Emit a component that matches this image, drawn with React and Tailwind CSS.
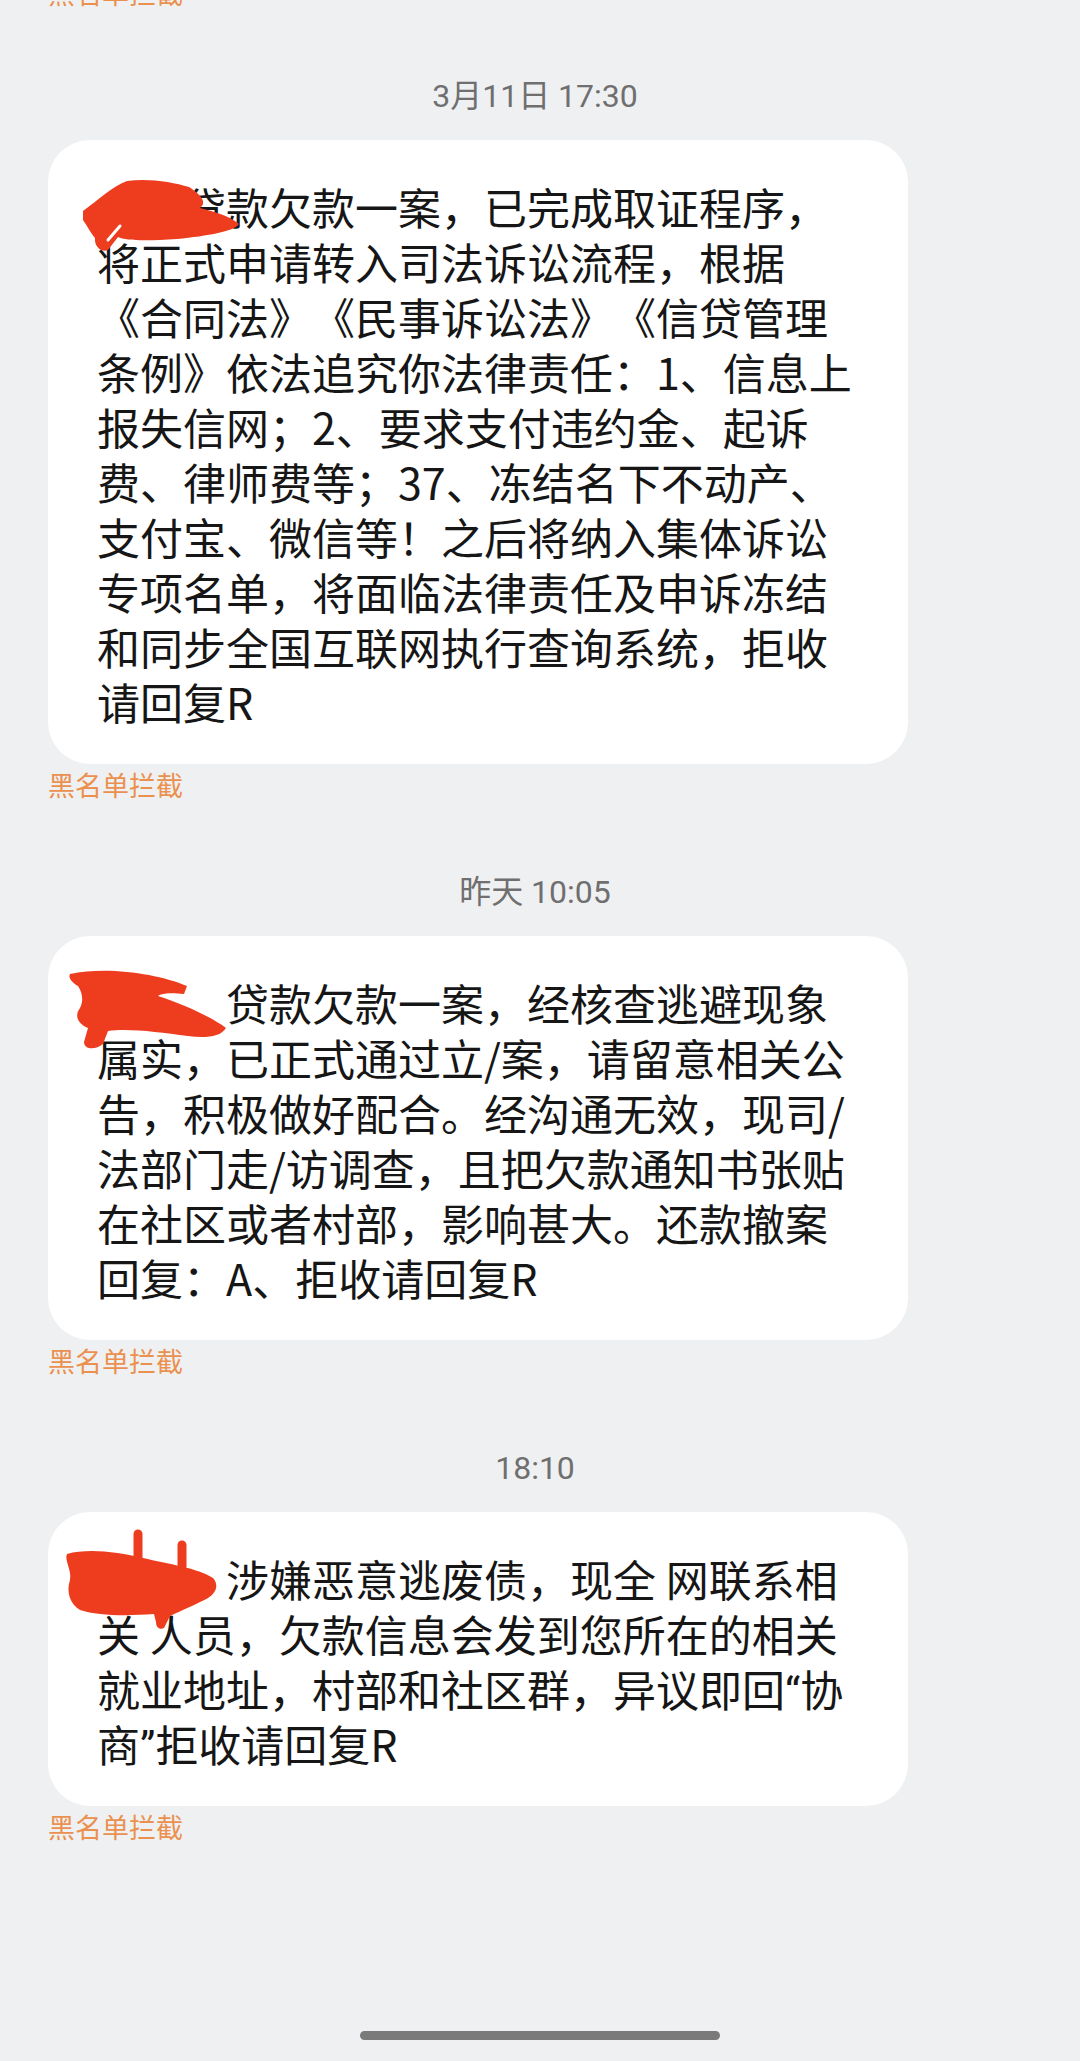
import React from 'react';

const messages = [
    {
        time: '3月11日 17:30',
        lines: [
            '\u3000\u3000贷款欠款一案，已完成取证程序，',
            '将正式申请转入司法诉讼流程，根据',
            '《合同法》《民事诉讼法》《信贷管理',
            '条例》依法追究你法律责任：1、信息上',
            '报失信网；2、要求支付违约金、起诉',
            '费、律师费等；37、冻结名下不动产、',
            '支付宝、微信等！之后将纳入集体诉讼',
            '专项名单，将面临法律责任及申诉冻结',
            '和同步全国互联网执行查询系统，拒收',
            '请回复R',
        ],
        scribble: 'a',
    },
    {
        time: '昨天 10:05',
        lines: [
            '\u3000\u3000\u3000贷款欠款一案，经核查逃避现象',
            '属实，已正式通过立/案，请留意相关公',
            '告，积极做好配合。经沟通无效，现司/',
            '法部门走/访调查，且把欠款通知书张贴',
            '在社区或者村部，影响甚大。还款撤案',
            '回复：A、拒收请回复R',
        ],
        scribble: 'b',
    },
    {
        time: '18:10',
        lines: [
            '\u3000\u3000\u3000涉嫌恶意逃废债，现全 网联系相',
            '关 人员，欠款信息会发到您所在的相关',
            '就业地址，村部和社区群，异议即回“协',
            '商”拒收请回复R',
        ],
        scribble: 'c',
    },
];

// hand-drawn red marks covering the sender name
const Scribble = ({ kind }) => {
    const red = '#ee3d1e';
    return (
        <svg className="absolute left-0 top-0 pointer-events-none" width="240" height="140" viewBox="0 0 240 140">
            {kind === 'a' && (
                <g>
                    <path
                        fill={red}
                        d="M35 71 C 50 60, 65 46, 79 41 C 100 38, 125 42, 141 47 C 152 54, 160 62, 152 68 C 167 72, 182 76, 191 84 C 187 91, 160 96, 129 99 C 100 101, 78 101, 70 97 L 60 110 C 53 113, 46 106, 47 98 C 42 92, 38 84, 35 80 Z"
                    />
                    <path d="M60 100 L 72 86" stroke="#ffffff" strokeWidth="3" strokeLinecap="round" />
                </g>
            )}
            {kind === 'b' && (
                <path
                    fill={red}
                    d="M22 38 C 60 30, 110 38, 139 50 L 136 58 C 120 56, 112 58, 110 60 C 140 70, 165 82, 178 92 C 172 102, 155 102, 140 100 C 110 96, 80 92, 60 95 L 55 108 C 48 114, 36 114, 36 106 L 40 92 C 30 88, 26 80, 32 72 C 36 64, 34 56, 30 50 C 24 46, 20 42, 22 38 Z"
                />
            )}
            {kind === 'c' && (
                <g>
                    <path
                        fill={red}
                        d="M19 42 C 40 36, 70 40, 95 46 C 120 52, 150 56, 165 66 C 172 74, 168 84, 152 90 C 140 96, 130 100, 122 104 L 116 116 C 112 118, 108 116, 108 110 L 106 102 C 80 104, 50 104, 32 98 C 22 92, 18 80, 22 68 C 24 58, 16 48, 19 42 Z"
                    />
                    <path d="M90 60 L 90 22" stroke={red} strokeWidth="9" strokeLinecap="round" />
                    <path d="M134 62 L 134 33" stroke={red} strokeWidth="9" strokeLinecap="round" />
                </g>
            )}
        </svg>
    );
};

const BlockedLabel = ({ className = '' }) => (
    <div className={`text-[27px] leading-[36px] text-[#eb9150] ${className}`}>黑名单拦截</div>
);

// curly quotes are narrow in the original font
const renderLine = (line) =>
    line.split(/([“”])/).map((part, k) =>
        part === '“' || part === '”' ? (
            <span key={k} className="font-['Roboto',sans-serif] leading-none">
                {part}
            </span>
        ) : (
            part
        )
    );

const App = () => {
    return (
        <div className="min-h-[2061px] w-[1080px] bg-[#eff0f2] flex flex-col font-['Noto_Sans_CJK_SC',sans-serif] overflow-hidden [text-spacing-trim:space-all]">
            <div className="px-[48px] flex flex-col">
                <BlockedLabel className="-mt-[25px]" />
                {messages.map((m, i) => (
                    <div key={i} className="flex flex-col">
                        <div
                            className={`pr-[10px] text-center text-[32px] leading-[40px] text-[#6f6f6f] font-['Roboto','Noto_Sans_CJK_SC',sans-serif] ${
                                i === 0 ? 'mt-[65px]' : 'mt-[69px]'
                            }`}
                        >
                            {m.time}
                        </div>
                        <div className="relative mt-[24px] w-[860px] bg-white rounded-[42px] pl-[49px] pr-[37px] pt-[39px] pb-[35px]">
                            {m.lines.map((line, j) => (
                                <div key={j} className="text-[43px] leading-[55px] text-[#161616] whitespace-pre">
                                    {renderLine(line)}
                                </div>
                            ))}
                            <Scribble kind={m.scribble} />
                        </div>
                        <BlockedLabel className="mt-[3px]" />
                    </div>
                ))}
            </div>
            <div className="mt-auto mb-[21px] flex justify-center">
                <div className="w-[360px] h-[9px] rounded-full bg-[#7a7a7a]"></div>
            </div>
        </div>
    );
};

export default App;
